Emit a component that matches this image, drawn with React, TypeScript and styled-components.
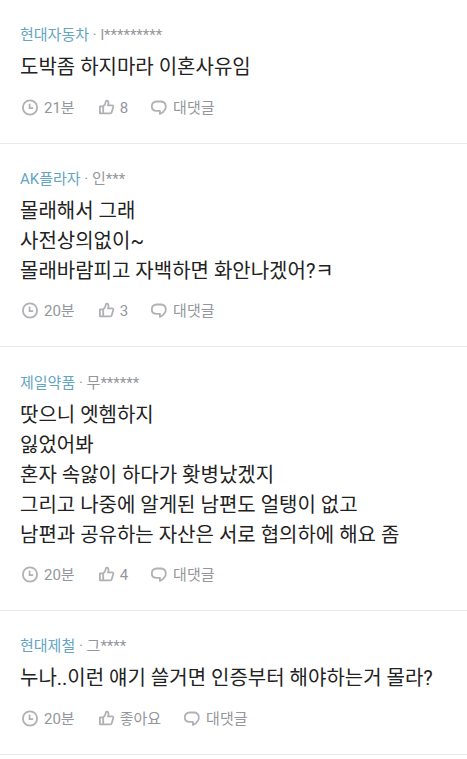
import React from "react";
import styled, { createGlobalStyle } from "styled-components";

const GlobalStyle = createGlobalStyle`
  * { box-sizing: border-box; }
  body {
    margin: 0;
    background: #fff;
    font-family: Roboto, "Noto Sans CJK KR", sans-serif;
    overflow: hidden;
  }
`;

const List = styled.ul`
  margin: 0;
  padding: 0;
  list-style: none;
`;

const Item = styled.li`
  padding: 25.2px 20px 25px;
  border-bottom: 1px solid #eaeaea;
`;

const Author = styled.div`
  height: 20px;
  font-size: 15px;
  line-height: 20px;
  color: #94969b;
  white-space: nowrap;
`;

const Company = styled.span`
  color: #63a5c3;
`;

const Body = styled.p`
  margin: 7.1px 0 0;
  font-size: 20px;
  line-height: 30px;
  color: #222;
  white-space: pre;
`;

const Meta = styled.div`
  display: flex;
  align-items: center;
  gap: 21px;
  height: 20px;
  margin-top: 15.4px;
  font-size: 15px;
  line-height: 20px;
  color: #94969b;
`;

const MetaItem = styled.span`
  display: flex;
  align-items: center;
  gap: 4px;
  white-space: nowrap;
`;

const Icon = styled.svg`
  display: block;
  width: 20px;
  height: 20px;
  fill: none;
  stroke: #b0b1b5;
  stroke-width: 1.8;
  stroke-linejoin: round;
  stroke-linecap: round;
`;

const ClockIcon = () => (
  <Icon viewBox="0 0 20 20">
    <circle cx="10" cy="9.5" r="7.1" />
    <path d="M9.6 5.8v4.3h3.6" strokeLinecap="butt" strokeLinejoin="miter" />
  </Icon>
);

const LikeIcon = () => (
  <Icon viewBox="0 0 20 20">
    <path d="M3.9 8.3h3.3v7H3.9zM7.2 8.3c1.5-1 2.4-2.5 2.6-4.8.1-1.6 2.7-1.2 2.7 1.1 0 1-.2 1.9-.5 2.7h4.1c.9 0 1.4.7 1.2 1.5l-1.5 5.3c-.2.8-.7 1.2-1.5 1.2H7.2" />
  </Icon>
);

const ReplyIcon = () => (
  <Icon viewBox="0 0 20 20">
    <path d="M10.9 12.9v3c2.4-.9 4-2.3 4.8-4 .7-.8 1.1-1.9 1.1-3.5 0-3.2-2-4.9-5.1-4.9H7.8C4.7 3.5 2.8 5.3 2.8 8.2s1.9 4.7 5 4.7z" />
  </Icon>
);

interface Comment {
  company: string;
  name: string;
  text: string;
  time: string;
  likes: string;
}

const comments: Comment[] = [
  { company: "현대자동차", name: "l*********", text: "도박좀 하지마라 이혼사유임", time: "21분", likes: "8" },
  { company: "AK플라자", name: "인***", text: "몰래해서 그래\n사전상의없이~\n몰래바람피고 자백하면 화안나겠어?ㅋ", time: "20분", likes: "3" },
  {
    company: "제일약품",
    name: "무******",
    text: "땃으니 엣헴하지\n잃었어봐\n혼자 속앓이 하다가 홧병났겠지\n그리고 나중에 알게된 남편도 얼탱이 없고\n남편과 공유하는 자산은 서로 협의하에 해요 좀",
    time: "20분",
    likes: "4",
  },
  { company: "현대제철", name: "그****", text: "누나..이런 얘기 쓸거면 인증부터 해야하는거 몰라?", time: "20분", likes: "좋아요" },
];

export default function App() {
  return (
    <>
      <GlobalStyle />
      <List>
        {comments.map((c) => (
          <Item key={c.company}>
            <Author>
              <Company>{c.company}</Company> · {c.name}
            </Author>
            <Body>{c.text}</Body>
            <Meta>
              <MetaItem><ClockIcon />{c.time}</MetaItem>
              <MetaItem><LikeIcon />{c.likes}</MetaItem>
              <MetaItem><ReplyIcon />대댓글</MetaItem>
            </Meta>
          </Item>
        ))}
      </List>
    </>
  );
}
